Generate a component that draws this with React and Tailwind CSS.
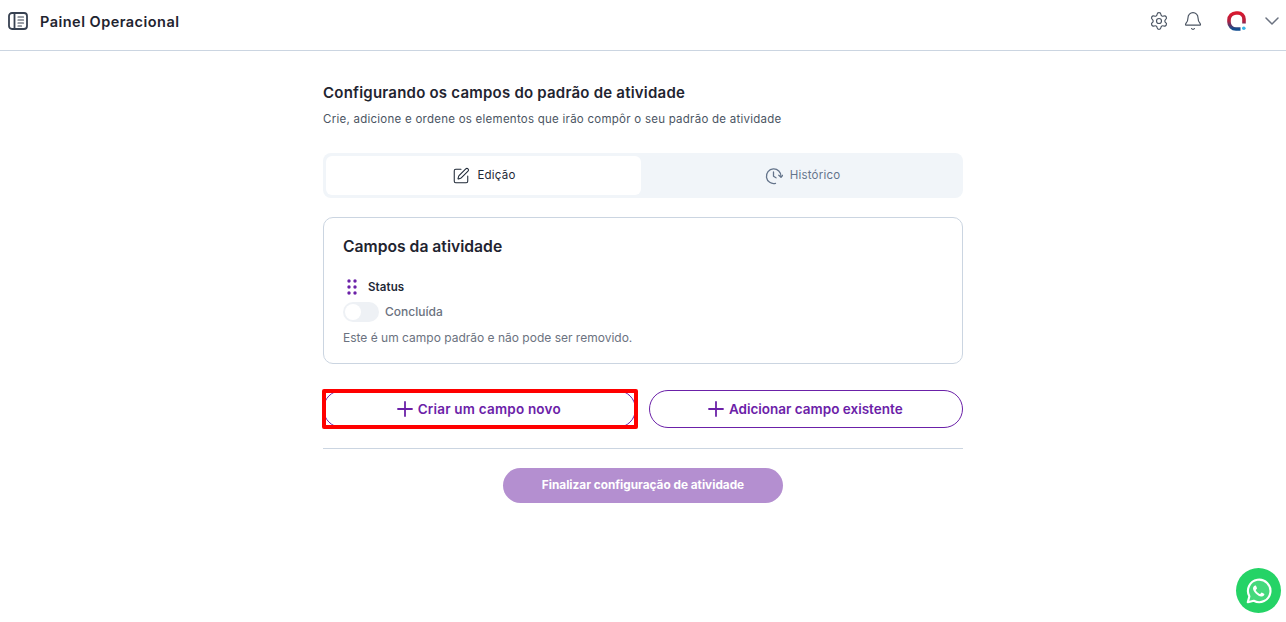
import React, { useState } from 'react';
import { ChevronDown, Settings, Bell, SquarePen, Plus } from 'lucide-react';

const font = 'font-["Inter","Noto_Sans",sans-serif]';

const BookIcon = () => (
  <svg width="20" height="20" viewBox="0 0 20 20" fill="none" stroke="#374151" strokeWidth="1.8" strokeLinecap="round" strokeLinejoin="round">
    <rect x="1" y="2" width="18" height="16" rx="3" />
    <path d="M6.500 2v16" />
    <path d="M10 6h5.500M10 9h5.500M10 12h5.500M10 15h3.500" strokeWidth="1.2" />
  </svg>
);

const Logo = () => (
  <svg width="20" height="20" viewBox="0 0 20 20" fill="none">
    <defs>
      <linearGradient id="logoGrad" x1="0" y1="0" x2="0" y2="1">
        <stop offset="0" stopColor="#d8182f" />
        <stop offset="0.5" stopColor="#b3203f" />
        <stop offset="1" stopColor="#0f4c8f" />
      </linearGradient>
    </defs>
    <path d="M17 12.500V8a6 6 0 0 0-6-6H9a7 7 0 0 0-7 7v2a7 7 0 0 0 7 7h4.500" stroke="url(#logoGrad)" strokeWidth="3.600" />
    <circle cx="16.800" cy="17.200" r="1.800" fill="#38b6e8" />
  </svg>
);

const ClockBack = () => (
  <svg width="18" height="18" viewBox="0 0 18 18" fill="none" stroke="currentColor" strokeWidth="1.300" strokeLinecap="round" strokeLinejoin="round">
    <path d="M16 9.500A7.300 7.300 0 1 0 10.500 16.300" />
    <path d="M8.500 5v4.300l2.500 1.500" />
    <path d="M13.800 8.300L16 10.300l1.700-2" />
  </svg>
);

const GripDots = () => (
  <svg width="10" height="16" viewBox="0 0 10 16" fill="#6b21a8">
    <circle cx="2" cy="2" r="1.700" />
    <circle cx="8" cy="2" r="1.700" />
    <circle cx="2" cy="8" r="1.700" />
    <circle cx="8" cy="8" r="1.700" />
    <circle cx="2" cy="14" r="1.700" />
    <circle cx="8" cy="14" r="1.700" />
  </svg>
);

const WhatsApp = () => (
  <svg width="30" height="30" viewBox="0 0 24 24" fill="none">
    <path d="M3 21l1.300-4.700A9 9 0 1 1 7.800 19.800L3 21z" fill="#ffffff26" stroke="#fff" strokeWidth="1.700" strokeLinejoin="round" />
    <path d="M9 7.500c-.3 0-.8.200-1.100.600-.5.600-.8 1.300-.7 2.100.2 1.300 1.100 2.800 2.400 4 1.400 1.300 2.800 2 4.100 2.200.9.100 1.700-.2 2.200-.8.300-.4.500-.9.400-1.200 0-.2-1.900-1.200-2.200-1.200-.3 0-.8 1-1.100 1.100-.4.100-1.400-.4-2.200-1.200-.8-.7-1.500-1.700-1.400-2 .1-.3 1-.9 1-1.200 0-.4-.8-2.200-1-2.300-.1-.1-.3-.1-.4-.1z" fill="#fff" />
  </svg>
);

export default function App() {
  const [tab, setTab] = useState('edicao');
  const [done, setDone] = useState(false);

  return (
    <div className={`min-h-[622px] bg-white relative ${font}`}>
      <header className="h-[51px] border-b border-[#cbd5e1] flex items-center justify-between pl-[8px] pr-[2px] pb-[8px]">
        <div className="flex items-center gap-[12px]">
          <BookIcon />
          <span className="text-[14.500px] font-semibold text-[#1f2430] tracking-[0.47px] mt-[1px]">Painel Operacional</span>
        </div>
        <div className="flex items-center">
          <Settings size={20} strokeWidth={1.4} className="text-[#4b5563]" />
          <Bell size={20} strokeWidth={1.4} className="text-[#4b5563] ml-[14px]" />
          <span className="ml-[24px]"><Logo /></span>
          <ChevronDown size={24} strokeWidth={1.5} className="text-[#6b7280] ml-[13px]" />
        </div>
      </header>

      <main className="w-[640px] mx-auto pt-[32px]">
        <h1 className="text-[15px] leading-[20px] font-semibold text-[#1f2430] tracking-[0.22px]">Configurando os campos do padrão de atividade</h1>
        <p className="text-[11.500px] leading-[16px] text-[#4b5563] mt-[8px] tracking-[0.25px]">Crie, adicione e ordene os elementos que irão compôr o seu padrão de atividade</p>

        <div className="mt-[26px] h-[45px] bg-[#f1f5f9] rounded-[8px] p-[3px] flex">
          <button
            onClick={() => setTab('edicao')}
            className={`w-[315px] rounded-[6px] flex items-center justify-center gap-[8px] text-[11.500px] tracking-[0.2px] ${tab === 'edicao' ? 'bg-white text-[#1f2937]' : 'text-[#64748b]'}`}
          >
            <SquarePen size={18} strokeWidth={1.4} />
            Edição
          </button>
          <button
            onClick={() => setTab('historico')}
            className={`flex-1 pl-[4px] rounded-[6px] flex items-center justify-center gap-[7px] text-[11.500px] tracking-[0.2px] ${tab === 'historico' ? 'bg-white text-[#1f2937]' : 'text-[#64748b]'}`}
          >
            <ClockBack />
            Histórico
          </button>
        </div>

        <section className="mt-[19px] h-[147px] border border-[#cbd5e1] rounded-[10px] px-[19px] pt-[19px]">
          <h2 className="text-[15.700px] leading-[20px] font-semibold text-[#1f2430]">Campos da atividade</h2>
          <div className="flex items-center gap-[11px] mt-[22px] pl-[4px]">
            <GripDots />
            <span className="text-[11.500px] leading-[16px] font-semibold text-[#1f2937] tracking-[0.1px]">Status</span>
          </div>
          <div className="flex items-center gap-[6px] mt-[7px]">
            <button
              onClick={() => setDone(!done)}
              className="w-[36px] h-[20px] rounded-full bg-[#eef1f5] p-[2px] flex"
            >
              <span className="w-[16px] h-[16px] rounded-full bg-white block" />
            </button>
            <span className="text-[12px] leading-[16px] font-medium text-[#6b7280]">Concluída</span>
          </div>
          <p className="text-[12px] leading-[16px] text-[#6b7280] mt-[8px]">Este é um campo padrão e não pode ser removido.</p>
        </section>

        <div className="mt-[26px] flex gap-[13px]">
          <div className="flex-1 relative">
            <button className="w-full h-[38px] rounded-full border border-[#6b21a8] flex items-center justify-center gap-[1px] text-[13.500px] tracking-[0.2px] font-semibold text-[#6b21a8]">
              <Plus size={24} strokeWidth={1.8} className="-ml-[5px]" />
              Criar um campo novo
            </button>
            <div className="absolute -left-[1px] -top-[1px] w-[316px] h-[40px] border-[4px] border-[#ff0000] rounded-[2px]" />
          </div>
          <button className="flex-1 h-[38px] rounded-full border border-[#6b21a8] flex items-center justify-center gap-[1px] text-[13.500px] font-semibold text-[#6b21a8]">
            <Plus size={24} strokeWidth={1.8} className="-ml-[5px]" />
            Adicionar campo existente
          </button>
        </div>

        <div className="mt-[20px] border-t border-[#cbd5e1]" />

        <div className="mt-[19px] flex justify-center">
          <button className="w-[280px] h-[35px] rounded-full bg-[#b48fd0] text-white text-[11.800px] font-bold">
            Finalizar configuração de atividade
          </button>
        </div>
      </main>

      <a className="absolute left-[1236px] top-[568px] w-[45px] h-[45px] rounded-full bg-[#25d366] flex items-center justify-center">
        <WhatsApp />
      </a>
    </div>
  );
}
